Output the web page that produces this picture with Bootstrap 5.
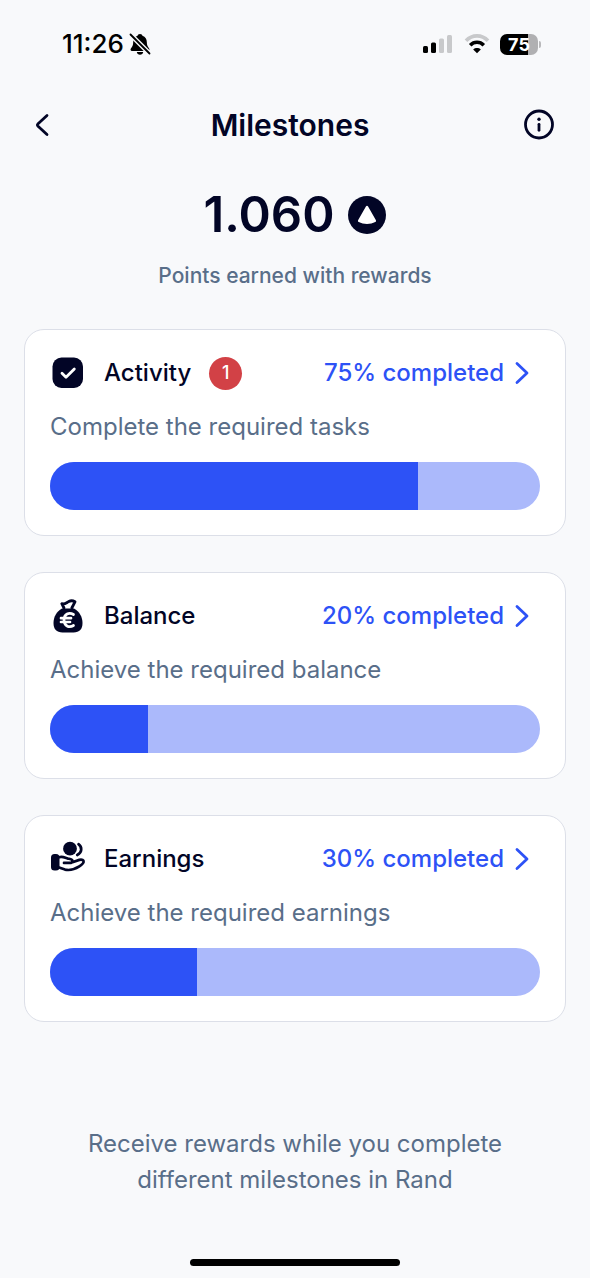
<!DOCTYPE html>
<html lang="en">
<head>
<meta charset="utf-8">
<meta name="viewport" content="width=device-width, initial-scale=1">
<title>Milestones</title>
<link href="https://cdn.jsdelivr.net/npm/bootstrap@5.3.0/dist/css/bootstrap.min.css" rel="stylesheet">
<style>
  :root { --ink: #020526; --muted: #596e89; --accent: #2d52f6; --accent-soft: #abb9fb; }
  body { background: #f8f9fb; color: var(--ink); font-family: Inter, "Liberation Sans", sans-serif; font-size: 24px; line-height: 36px; }
  svg { display: block; flex: none; }
  .status-bar { height: 88px; padding: 0 49px 0 62px; color: #000; }
  .clock { font-size: 26px; font-weight: 500; }
  .status-icons { gap: 10px; }
  .battery { width: 38px; height: 21px; border-radius: 7px; color: #fff; font-size: 18px; line-height: 21px; font-weight: 700; background: linear-gradient(90deg, #000 75%, #b0b0b2 75%); }
  .battery-cap { width: 2px; height: 7px; margin-left: 1px; border-radius: 0 2px 2px 0; background: #b9b9bb; }
  .page-head { height: 74px; padding: 0 34px; }
  .page-head h1 { font-size: 30px; line-height: 36px; font-weight: 600; }
  .icon-btn { height: 32px; color: var(--ink); }
  .back-btn { width: 22px; }
  .total { font-size: 49px; line-height: 60px; font-weight: 600; margin-top: 23px; gap: 14px; }
  .caption-text { font-size: 21px; line-height: 32px; font-weight: 500; color: var(--muted); margin-top: 15px; }
  .milestones { padding: 0 24px; margin-top: 37px; gap: 36px; }
  .milestone { border: 1px solid #dcdfe8; border-radius: 20px; padding: 25px; }
  .milestone-head { gap: 18px; }
  .milestone h2 { font-size: 24px; line-height: 36px; font-weight: 500; }
  .milestone p { color: var(--muted); margin: 18px 0 17px; }
  .count { width: 33px; height: 33px; font-size: 18px; font-weight: 500; color: #fff; background: #d24146; }
  .more-link { color: var(--accent); font-weight: 500; }
  .milestone .progress { height: 48px; border-radius: 24px; background: var(--accent-soft); }
  .milestone .progress-bar { background: var(--accent); }
  .foot-note { color: var(--muted); max-width: 460px; margin-top: 104px; }
  .home-bar { width: 210px; height: 7px; border-radius: 4px; background: #000; margin-bottom: 12px; }
</style>
</head>
<body>
<div class="d-flex flex-column min-vh-100">
  <div class="status-bar d-flex align-items-center justify-content-between">
    <div class="d-flex align-items-center gap-1">
      <span class="clock">11:26</span>
      <svg width="24" height="24" viewBox="0 0 24 24" aria-label="Silent">
        <path d="M12 2c1.500 0 2.300 1 2.500 1.800 3 1 4.300 3.300 4.300 6.200 0 3.500 1 4.800 2 6 1.100 1.300.8 3-.8 3H4c-1.600 0-1.900-1.700-.8-3 1-1.200 2-2.500 2-6C5.200 7.100 6.500 4.800 9.500 3.800 9.700 3 10.500 2 12 2zM8.800 20h6.400c-.3 1.700-1.500 2.700-3.200 2.700S9.100 21.700 8.800 20z"/>
        <path d="M2.500 2.500 21.500 21.500" stroke="#f8f9fb" stroke-width="4.600"/>
        <path d="M2.500 2.500 21.500 21.500" stroke="#000" stroke-width="1.800" stroke-linecap="round"/>
      </svg>
    </div>
    <div class="status-icons d-flex align-items-center">
      <svg width="32" height="20" viewBox="0 0 32 20" aria-label="Signal">
        <rect x="1" y="12" width="5" height="7" rx="1.500"/><rect x="9" y="8.500" width="5" height="10.500" rx="1.500"/>
        <g fill="#c8c9cb"><rect x="17" y="4.500" width="5" height="14.500" rx="1.500"/><rect x="25" y="1" width="5" height="18" rx="1.500"/></g>
      </svg>
      <svg width="26" height="20" viewBox="1 0 26 20" fill="none" aria-label="Wi-Fi">
        <path d="M3 6.800C9.200.2 18.800.2 25 6.800" stroke="#c8c9cb" stroke-width="3.600"/>
        <path d="M7.200 11.200c3.900-3.900 9.700-3.900 13.600 0" stroke="#000" stroke-width="3.600"/>
        <path d="M14 19.300 10.200 15.500c2.100-1.900 5.500-1.900 7.600 0z" fill="#000"/>
      </svg>
      <div class="d-flex align-items-center"><span class="battery text-center">75</span><span class="battery-cap"></span></div>
    </div>
  </div>

  <header class="page-head d-flex align-items-center justify-content-between">
    <button type="button" class="icon-btn back-btn btn p-0 border-0" aria-label="Back">
      <svg width="16" height="32" viewBox="0 0 16 32" fill="none" stroke="currentColor" stroke-width="2.800" stroke-linecap="round" stroke-linejoin="round"><path d="M13 6.500 3.800 15.100a1.200 1.200 0 0 0 0 1.800L13 25.500"/></svg>
    </button>
    <h1 class="m-0">Milestones</h1>
    <button type="button" class="icon-btn btn p-0 border-0" aria-label="Information">
      <svg width="32" height="32" viewBox="0 0 32 32" fill="none" stroke="currentColor" stroke-width="2.800" stroke-linecap="round"><circle cx="15" cy="15.500" r="13.500"/><path d="M15 15.300v6"/><circle cx="15" cy="10.300" r="1.700" fill="currentColor" stroke="none"/></svg>
    </button>
  </header>

  <main class="flex-grow-1">
    <div class="total d-flex align-items-center justify-content-center">
      <span>1.060</span>
      <svg width="38" height="38" viewBox="0 0 38 38" aria-label="points"><circle cx="19" cy="19" r="19" fill="#020526"/><path d="M17.900 10.500c.5-.9 1.700-.9 2.200 0l7.700 13.400c.5.9.3 1.700-.6 2.200-4.600 2.500-11.800 2.500-16.400 0-.9-.5-1.100-1.300-.6-2.200z" fill="#fff"/></svg>
    </div>
    <p class="caption-text text-center mb-0">Points earned with rewards</p>

    <div class="milestones d-flex flex-column">
      <section class="milestone bg-white">
        <div class="milestone-head d-flex align-items-center">
          <svg width="36" height="36" viewBox="0 0 36 36"><rect x="2.500" y="2.500" width="30.500" height="30.500" rx="9" fill="#020526"/><path d="m12 18.300 4 4 8.300-8.300" fill="none" stroke="#fff" stroke-width="2.800" stroke-linecap="round" stroke-linejoin="round"/></svg>
          <h2 class="mb-0">Activity</h2>
          <span class="count rounded-circle d-flex align-items-center justify-content-center">1</span>
          <a href="#activity" class="more-link d-flex align-items-center text-decoration-none ms-auto">75% completed
            <svg class="ms-2" width="28" height="28" viewBox="0 0 28 28" fill="none" stroke="currentColor" stroke-width="2.800" stroke-linecap="round" stroke-linejoin="round"><path d="m5 4.500 10 9.500L5 23.500"/></svg></a>
        </div>
        <p>Complete the required tasks</p>
        <div class="progress" role="progressbar" aria-label="Activity" aria-valuenow="75" aria-valuemin="0" aria-valuemax="100"><div class="progress-bar" style="width: 75%"></div></div>
      </section>

      <section class="milestone bg-white">
        <div class="milestone-head d-flex align-items-center">
          <svg width="36" height="36" viewBox="0 0 36 36"><path d="M12 10.500C6.500 13.500 3.500 19 3.500 25c0 6 3 9.500 9 9.500h11c6 0 9-3.500 9-9.500 0-6-3-11.500-8.500-14.500z" fill="#020526"/><path d="m14 10-2.200-4.300c3 .9 4.500-.9 7-2.200 2.300-1.200 4.500-.7 6.200.3L21.800 10" fill="none" stroke="#020526" stroke-width="2.800" stroke-linecap="round" stroke-linejoin="round"/><path d="M23.500 16.500c-4.500-2.800-9.500-.5-9.500 5.500s5 8.300 9.500 5.500M11 20.200h10M11 24h9" fill="none" stroke="#fff" stroke-width="2.700" stroke-linecap="round"/></svg>
          <h2 class="mb-0">Balance</h2>
          <a href="#balance" class="more-link d-flex align-items-center text-decoration-none ms-auto">20% completed
            <svg class="ms-2" width="28" height="28" viewBox="0 0 28 28" fill="none" stroke="currentColor" stroke-width="2.800" stroke-linecap="round" stroke-linejoin="round"><path d="m5 4.500 10 9.500L5 23.500"/></svg></a>
        </div>
        <p>Achieve the required balance</p>
        <div class="progress" role="progressbar" aria-label="Balance" aria-valuenow="20" aria-valuemin="0" aria-valuemax="100"><div class="progress-bar" style="width: 20%"></div></div>
      </section>

      <section class="milestone bg-white">
        <div class="milestone-head d-flex align-items-center">
          <svg width="36" height="36" viewBox="0 0 36 36"><circle cx="20" cy="7.700" r="6.900" fill="#020526"/><rect x="1" y="13" width="8.500" height="16.500" rx="3.500" fill="#020526"/><g fill="none" stroke="#020526" stroke-width="2.700" stroke-linecap="round" stroke-linejoin="round"><path d="M28.500 3.200c4 3 3.600 8.300-1.300 10.800"/><path d="M9 16.300c4-1.300 6 .7 9 1.300 2.500.4 4.500.4 4.500 2.300 0 1.500-1.300 2-3.300 2H14M22.500 21.200l6.800-2.300c2.800-.9 4.500.4 4.300 2-.2 1.800-2 3-4.300 4.500-5.500 3.500-9.300 4.400-14.300 3.200L9 26.500"/></g></svg>
          <h2 class="mb-0">Earnings</h2>
          <a href="#earnings" class="more-link d-flex align-items-center text-decoration-none ms-auto">30% completed
            <svg class="ms-2" width="28" height="28" viewBox="0 0 28 28" fill="none" stroke="currentColor" stroke-width="2.800" stroke-linecap="round" stroke-linejoin="round"><path d="m5 4.500 10 9.500L5 23.500"/></svg></a>
        </div>
        <p>Achieve the required earnings</p>
        <div class="progress" role="progressbar" aria-label="Earnings" aria-valuenow="30" aria-valuemin="0" aria-valuemax="100"><div class="progress-bar" style="width: 30%"></div></div>
      </section>
    </div>
    <p class="foot-note text-center mx-auto mb-0">Receive rewards while you complete different milestones in Rand</p>
  </main>
  <div class="home-bar mx-auto"></div>
</div>
<script src="https://cdn.jsdelivr.net/npm/bootstrap@5.3.0/dist/js/bootstrap.bundle.min.js"></script>
</body>
</html>
